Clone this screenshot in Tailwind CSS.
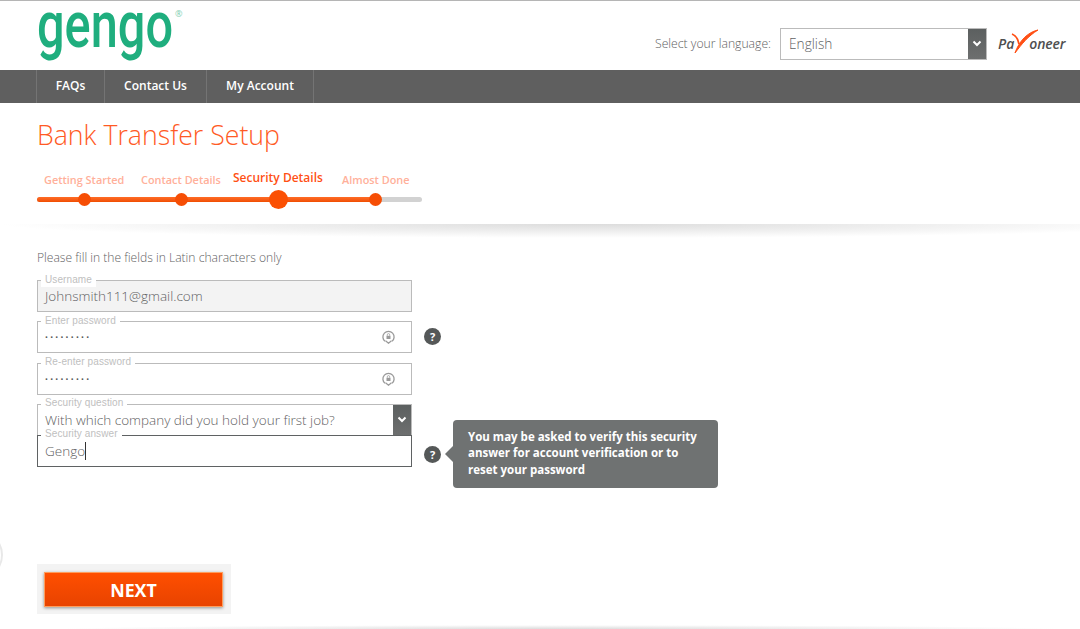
<!DOCTYPE html>
<html lang="en">
<head>
    <meta charset="UTF-8">
    <meta name="viewport" content="width=device-width, initial-scale=1.0">
    <title>Bank Transfer Setup</title>
    <script src="https://cdn.jsdelivr.net/npm/@tailwindcss/browser@4"></script>
</head>
<body class="relative bg-white h-[629px] overflow-hidden font-['Open_Sans',sans-serif] text-[#5f6263]">
    <!-- Header -->
    <header class="h-[70px] border-t-[1px] border-[#b5b5b5] flex items-start justify-between pl-[37px] pr-[14px]">
        <svg class="w-[150px] h-[66px] mt-[1px]" viewBox="0 0 150 66">
            <text x="0" y="45" textLength="136" lengthAdjust="spacingAndGlyphs" font-family="Roboto" font-weight="500" font-size="64" fill="#1fae7e">gengo</text>
            <text x="138" y="15" font-family="Open Sans" font-size="9" fill="#7fcfb3">®</text>
        </svg>
        <div class="flex items-center mt-[27px]">
            <span class="text-[12.2px] font-light mr-[9px]">Select your language:</span>
            <div class="w-[207px] h-[32px] border border-[#bbbbbb] flex justify-between">
                <span class="pl-[8px] text-[13.7px] font-light leading-[30px]">English</span>
                <div class="w-[18px] h-[30px] bg-gradient-to-b from-[#5c6060] to-[#6d6f6f] flex items-center justify-center">
                    <svg class="w-[10px] h-[8px]" viewBox="0 0 10 8"><path d="M1.5 1.5 5 5 8.500 1.500" fill="none" stroke="#fff" stroke-width="2"/></svg>
                </div>
            </div>
            <!-- Payoneer logo -->
            <div class="relative w-[68px] h-[24px] ml-[11px] flex items-center text-[14px] font-semibold italic text-[#4f4f4f] leading-none">
                <span>Pa</span>
                <span class="ml-[15px] tracking-[-0.2px]">oneer</span>
                <svg class="absolute left-[12px] -top-[4px] w-[32px] h-[28px]" viewBox="0 0 32 28"><path d="M2 6C5 7 8 11 9 16" fill="none" stroke="#ff4f14" stroke-width="1.800"/><path d="M28 2C18 4 9 13 5 25 11 17 18 8 28 2Z" fill="#ff4f14" stroke="#ff4f14"/></svg>
            </div>
        </div>
    </header>

    <!-- Nav -->
    <nav class="h-[33px] bg-[#5f5f5f] pl-[36px] pb-[2px] flex text-[12px] font-semibold text-white">
        <a class="w-[68px] -mb-[2px] pb-[2px] border-l border-[#747474] flex items-center justify-center">FAQs</a>
        <a class="w-[102px] -mb-[2px] pb-[2px] border-l border-[#747474] flex items-center justify-center">Contact Us</a>
        <a class="w-[108px] -mb-[2px] pb-[2px] border-x border-[#747474] flex items-center justify-center">My Account</a>
    </nav>

    <main class="pl-[37px]">
        <h1 class="text-[26.7px] font-light text-[#ff5a24] leading-[37px] mt-[13px]">Bank Transfer Setup</h1>

        <!-- Stepper -->
        <div class="w-[385px] mt-[15px]">
            <div class="h-[24px] flex items-center text-[10.9px] font-semibold text-[#ffb09a] pl-[7px]">
                <span class="w-[97px]">Getting Started</span>
                <span class="w-[92px]">Contact Details</span>
                <span class="w-[109px] text-[12px] text-[#ff5014] -mt-[5px]">Security Details</span>
                <span>Almost Done</span>
            </div>
            <div class="relative h-[5px] mt-[5px] bg-[#d2d2d2] rounded-full">
                <div class="h-full w-[338px] rounded-full bg-gradient-to-b from-[#ff6c26] to-[#f04e00]"></div>
                <span class="absolute left-[41px] -top-[4px] w-[13px] h-[13px] rounded-full bg-[#f64e05]"></span>
                <span class="absolute left-[138px] -top-[4px] w-[13px] h-[13px] rounded-full bg-[#f64e05]"></span>
                <span class="absolute left-[232px] -top-[7px] w-[19px] h-[19px] rounded-full bg-[#fb5003]"></span>
                <span class="absolute left-[332px] -top-[4px] w-[13px] h-[13px] rounded-full bg-[#f64e05]"></span>
            </div>
        </div>

        <!-- Form -->
        <p class="mt-[47px] text-[12.1px] font-light leading-[18px]">Please fill in the fields in Latin characters only</p>

        <div class="mt-[13px] w-[405px]">
            <div class="relative w-[375px] h-[32px] border border-[#bbbbbb] bg-[#f3f3f3] pl-[7px] text-[13.5px] font-light leading-[30px]">
                <span class="absolute -top-[6px] left-[3px] px-[4px] h-[12px] bg-white font-['Liberation_Sans',sans-serif] text-[10px] tracking-[0.1px] leading-[10px] text-[#c0c0c0]">Username</span>
                Johnsmith111@gmail.com
            </div>

            <div class="flex items-center mt-[9px]">
                <div class="relative w-[375px] h-[32px] border border-[#bbbbbb] pl-[7px] flex items-center justify-between pr-[16px]">
                    <span class="absolute -top-[6px] left-[3px] px-[4px] h-[10px] bg-white font-['Liberation_Sans',sans-serif] text-[10px] tracking-[0.1px] leading-[10px] text-[#c0c0c0]">Enter password</span>
                    <span class="text-[10px] font-bold tracking-[2.300px] text-[#4f5253]">·········</span>
                    <svg class="w-[13px] h-[14px]" viewBox="0 0 13 14"><path d="M3 11.300A5.600 5.600 0 1 1 10 11.300" fill="none" stroke="#9a9a9a" stroke-width="1.300"/><path d="M3.500 10.800l3 2.400 3-2.400" fill="none" stroke="#9a9a9a" stroke-width="1.300"/><rect x="4.500" y="5.800" width="4" height="3.200" fill="#9a9a9a"/><path d="M5.300 5.800V4.800a1.200 1.200 0 0 1 2.400 0v1" fill="none" stroke="#9a9a9a" stroke-width="0.800"/></svg>
                </div>
                <span class="ml-[12px] -mt-[2px] w-[17px] h-[17px] rounded-full bg-[#555858] flex items-center justify-center text-[11px] font-bold text-white leading-none">?</span>
            </div>

            <div class="relative w-[375px] h-[32px] mt-[10px] border border-[#bbbbbb] pl-[7px] flex items-center justify-between pr-[16px]">
                <span class="absolute -top-[7px] left-[3px] px-[4px] h-[10px] bg-white font-['Liberation_Sans',sans-serif] text-[10px] tracking-[0.1px] leading-[10px] text-[#c0c0c0]">Re-enter password</span>
                <span class="text-[10px] font-bold tracking-[2.300px] text-[#4f5253]">·········</span>
                <svg class="w-[13px] h-[14px]" viewBox="0 0 13 14"><path d="M3 11.300A5.600 5.600 0 1 1 10 11.300" fill="none" stroke="#9a9a9a" stroke-width="1.300"/><path d="M3.500 10.800l3 2.400 3-2.400" fill="none" stroke="#9a9a9a" stroke-width="1.300"/><rect x="4.500" y="5.800" width="4" height="3.200" fill="#9a9a9a"/><path d="M5.300 5.800V4.800a1.200 1.200 0 0 1 2.400 0v1" fill="none" stroke="#9a9a9a" stroke-width="0.800"/></svg>
            </div>

            <div class="relative w-[375px] h-[32px] mt-[9px] border border-[#bbbbbb] pl-[7px] flex justify-between text-[13.5px] font-light leading-[30px]">
                <span class="absolute -top-[7px] left-[3px] px-[4px] h-[10px] bg-white font-['Liberation_Sans',sans-serif] text-[10px] tracking-[0.1px] leading-[10px] text-[#c0c0c0]">Security question</span>
                With which company did you hold your first job?
                <div class="w-[18px] h-[30px] bg-gradient-to-b from-[#5c6060] to-[#6d6f6f] flex items-center justify-center">
                    <svg class="w-[10px] h-[8px]" viewBox="0 0 10 8"><path d="M1.500 1.500 5 5 8.500 1.500" fill="none" stroke="#fff" stroke-width="2"/></svg>
                </div>
            </div>

            <div class="flex items-center -mt-[1px]">
                <div class="relative w-[375px] h-[32px] border border-[#5f6263] bg-white pl-[7px] text-[13.5px] font-light leading-[30px]">
                    <span class="absolute -top-[7px] left-[3px] px-[4px] h-[10px] bg-white font-['Liberation_Sans',sans-serif] text-[10px] tracking-[0.1px] leading-[10px] text-[#c0c0c0]">Security answer</span>
                    <span class="border-r border-[#333]">Gengo</span>
                </div>
                <span class="relative ml-[12px] mt-[6px] w-[17px] h-[17px] rounded-full bg-[#555858] flex items-center justify-center text-[11px] font-bold text-white leading-none">?
                    <!-- Tooltip -->
                    <div class="absolute left-[29px] -top-[26px] w-[265px] h-[68px] rounded-[4px] bg-[#6f7272] pl-[15px] pr-[20px] pt-[9px] text-left text-[11.5px] font-bold leading-[16.5px] text-white">
                        <span class="absolute -left-[8px] top-[26px] border-y-[8px] border-r-[8px] border-y-transparent border-r-[#6f7272]"></span>
                        You may be asked to verify this security answer for account verification or to reset your password
                    </div>
                </span>
            </div>
        </div>

        <!-- Next -->
        <div class="mt-[97px] w-[194px] h-[50px] bg-[#f3f3f3] pl-[7px] pt-[8px]">
            <button class="w-[179px] h-[35px] pt-[1px] border border-[#ff9d5c] bg-gradient-to-b from-[#ff4f00] to-[#e84300] text-[17.8px] font-bold text-white shadow-[0_1px_3px_rgba(0,0,0,0.4)]">NEXT</button>
        </div>
    </main>

    <!-- Page edge details -->
    <div class="absolute top-[224px] left-0 w-full h-[14px] bg-[radial-gradient(ellipse_farthest-side_at_55%_0%,#dcdcdc,transparent)]"></div>
    <div class="absolute bottom-0 left-[60px] w-[1000px] h-[4px] bg-[radial-gradient(ellipse_farthest-side_at_50%_100%,#dcdcdc,transparent)]"></div>
    <div class="absolute -left-[47px] top-[530px] w-[50px] h-[50px] rounded-full border-2 border-[#e8e8e8]"></div>
</body>
</html>
